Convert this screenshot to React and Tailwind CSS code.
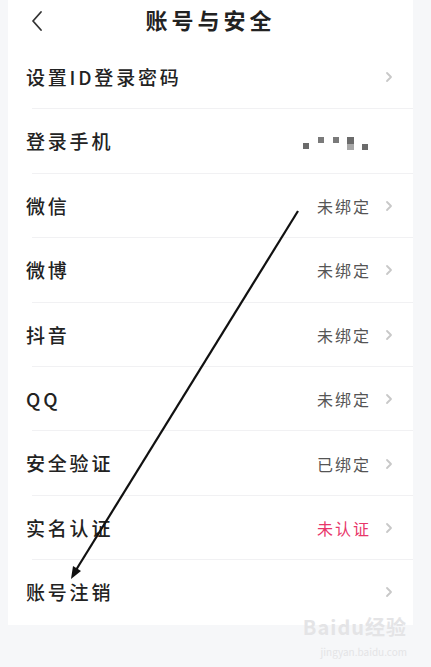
import React from 'react';

const rows = [
    { label: '设置ID登录密码' },
    { label: '登录手机', masked: true },
    { label: '微信', value: '未绑定' },
    { label: '微博', value: '未绑定' },
    { label: '抖音', value: '未绑定' },
    { label: 'QQ', value: '未绑定' },
    { label: '安全验证', value: '已绑定' },
    { label: '实名认证', value: '未认证', red: true },
    { label: '账号注销' },
];

const Chevron = () => (
    <svg width="8" height="12" viewBox="0 0 8 12" className="shrink-0">
        <path d="M2 2l4 4-4 4" fill="none" stroke="#c8c8c8" strokeWidth="1.8" strokeLinecap="round" strokeLinejoin="round" />
    </svg>
);

const MaskedPhone = () => (
    <svg width="66" height="18" viewBox="0 0 66 18" className="mr-[24px]">
        <rect x="0" y="10" width="6" height="6" fill="#6b6b6b" />
        <rect x="15" y="4" width="6" height="6" fill="#7a7a7a" />
        <rect x="30" y="4" width="6" height="6" fill="#7a7a7a" />
        <rect x="44" y="4" width="7" height="7" fill="#6b6b6b" />
        <rect x="44" y="11" width="7" height="6" fill="#a8a8a8" />
        <rect x="59" y="11" width="6" height="6" fill="#6b6b6b" />
    </svg>
);

const Row = ({ row, last }) => (
    <div className={`relative flex items-center h-[64.4px] pl-[18px] pr-[20px] ${last ? '' : 'after:absolute after:left-[24px] after:right-0 after:bottom-0 after:h-px after:bg-[#f1f1f3]'}`}>
        <span className="flex-1 text-[19px] tracking-[2.8px] text-[#222] font-medium">{row.label}</span>
        {row.masked && <MaskedPhone />}
        {row.value && (
            <span className={`text-[16px] tracking-[2px] mr-[14px] ${row.red ? 'text-[#e8366a]' : 'text-[#555]'}`}>{row.value}</span>
        )}
        {!row.masked && <Chevron />}
    </div>
);

export default function App() {
    return (
        <div className="relative w-[431px] h-[667px] bg-[#f6f7f9] overflow-hidden" style={{ fontFamily: '"Noto Sans CJK SC", "Noto Sans", sans-serif' }}>
            <div className="mx-[8px] w-[405px] bg-white">
                <div className="relative flex items-center justify-center h-[45px]">
                    <svg width="14" height="22" viewBox="0 0 14 22" className="absolute left-[22px] top-[10px]">
                        <path d="M11 2L3 11l8 9" fill="none" stroke="#333" strokeWidth="1.8" strokeLinecap="round" strokeLinejoin="round" />
                    </svg>
                    <h1 className="text-[22px] font-bold tracking-[4px] text-[#222] -mt-[6px]">账号与安全</h1>
                </div>
                {rows.map((row, i) => (
                    <Row key={row.label} row={row} last={i === rows.length - 1} />
                ))}
            </div>

            <div className="absolute right-[24px] bottom-[8px] flex flex-col items-end gap-[4px] text-[#e4e4e6] select-none">
                <span className="text-[20px] font-bold leading-[28px] tracking-[1px]">Baidu经验</span>
                <span className="text-[10px] leading-[14px]">jingyan.baidu.com</span>
            </div>

            <svg className="absolute left-0 top-0 pointer-events-none" width="431" height="667" viewBox="0 0 431 667">
                <line x1="298" y1="211" x2="76" y2="570" stroke="#111" strokeWidth="2.2" />
                <path d="M71 579l2-13 8 5z" fill="#111" />
            </svg>
        </div>
    );
}
